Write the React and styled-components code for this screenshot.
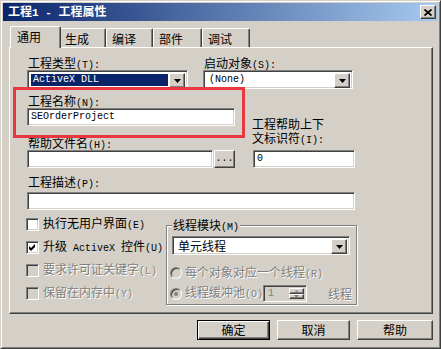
import React from 'react';
import styled, { createGlobalStyle, css } from 'styled-components';

const GlobalStyle = createGlobalStyle`
  html, body { margin: 0; padding: 0; background: #d4d0c8; }
  body {
    font-family: "Noto Sans CJK SC", "Liberation Sans", sans-serif;
    font-size: 12px;
    color: #000;
  }
  * { box-sizing: border-box; }
`;

const raised = css`
  background: #d4d0c8;
  border: 1px solid;
  border-color: #fff #404040 #404040 #fff;
  box-shadow: inset -1px -1px #808080;
`;

const sunken = css`
  border: 1px solid;
  border-color: #808080 #fff #fff #808080;
  box-shadow: inset 1px 1px #404040, inset -1px -1px #d4d0c8;
`;

const disabledText = css`
  color: #808080;
  text-shadow: 1px 1px #fff;
`;

const Half = styled.span`
  font-family: "Liberation Mono", monospace;
  font-size: 10px;
`;

// latin runs get the half-width mono face, like SimSun does
const Txt = ({ children }) =>
  String(children)
    .split(/([\x00-\xff]+)/)
    .map((p, i) =>
      p === '' ? null : i % 2 === 1 ? <Half key={i}>{p}</Half> : <React.Fragment key={i}>{p}</React.Fragment>
    );

const Window = styled.div`
  width: 441px;
  height: 349px;
  display: flex;
  flex-direction: column;
  background: #d4d0c8;
  border: 1px solid;
  border-color: #d4d0c8 #404040 #404040 #d4d0c8;
  box-shadow: inset 1px 1px #fff, inset -1px -1px #808080;
  padding: 2px;
`;

const TitleBar = styled.div`
  height: 18px;
  display: flex;
  align-items: center;
  padding: 0 2px 0 5px;
  background: linear-gradient(to right, #0a246a, #a6caf0);
  color: #fff;
  font-weight: bold;
  line-height: 14px;
  ${Half} { font-size: 11px; }
`;

const CloseButton = styled.div`
  ${raised};
  margin-left: auto;
  width: 16px;
  height: 14px;
  display: flex;
  align-items: center;
  justify-content: center;
`;

const Body = styled.div`
  flex: 1;
  display: flex;
  flex-direction: column;
  padding: 5px 5px 6px 6px;
`;

const TabRow = styled.div`
  display: flex;
  align-items: flex-end;
  height: 21px;
  padding-left: 3px;
`;

const Tab = styled.div`
  width: ${p => p.$w}px;
  height: 19px;
  padding: 3px 0 0 5px;
  line-height: 14px;
  background: #d4d0c8;
  border-top: 1px solid #fff;
  border-left: 1px solid #fff;
  border-right: 1px solid #404040;
  border-radius: 2px 2px 0 0;
  box-shadow: inset -1px 0 #808080;
  white-space: nowrap;
  ${p => p.$active && css`
    width: ${p.$w + 4}px;
    height: 22px;
    margin: 0 -2px -1px;
    padding-left: 6px;
    position: relative;
    z-index: 1;
  `}
`;

const Panel = styled.div`
  height: 267px;
  border: 1px solid;
  border-color: #fff #404040 #404040 #fff;
  box-shadow: inset -1px -1px #808080;
  padding: 8px 0 0 17px;
  display: flex;
  flex-direction: column;
`;

const Row = styled.div`
  display: flex;
  align-items: ${p => p.$align || 'flex-start'};
  gap: ${p => p.$gap || 0}px;
  margin-top: ${p => p.$mt || 0}px;
`;

const Col = styled.div`
  display: flex;
  flex-direction: column;
  width: ${p => p.$w}px;
  margin-left: ${p => p.$ml || 0}px;
`;

const Label = styled.div`
  line-height: 14px;
  height: 14px;
  padding-left: 1px;
  white-space: nowrap;
  margin-top: ${p => p.$mt || 0}px;
  margin-bottom: ${p => p.$mb || 0}px;
`;

const MultiLabel = styled.div`
  line-height: 14px;
  margin: 0 0 2px -1px;
  white-space: nowrap;
`;

const NameGroup = styled.div`
  position: relative;
  display: flex;
  flex-direction: column;
  margin-top: 5px;
  &::after {
    content: '';
    position: absolute;
    top: -7px;
    left: -14px;
    right: -10px;
    bottom: -12px;
    border: 3px solid #e8373f;
    pointer-events: none;
  }
`;

const TextBox = styled.div`
  ${sunken};
  width: ${p => (p.$w ? `${p.$w}px` : 'auto')};
  height: 18px;
  background: #fff;
  padding: 0 3px;
  display: flex;
  align-items: center;
  line-height: 12px;
  white-space: nowrap;
`;

const Combo = styled.div`
  ${sunken};
  width: ${p => p.$w}px;
  height: 19px;
  background: #fff;
  padding: 2px;
  display: flex;
  margin-left: ${p => p.$ml || 0}px;
  margin-top: ${p => p.$mt || 0}px;
`;

const ComboText = styled.div`
  flex: 1;
  margin: 1px 1px 0 1px;
  padding-left: 2px;
  display: flex;
  align-items: center;
  line-height: 12px;
  white-space: nowrap;
  ${p => p.$selected && css`
    background: #0a246a;
    color: #fff;
  `}
`;

const DropButton = styled.div`
  ${raised};
  width: 16px;
  height: 15px;
  display: flex;
  align-items: center;
  justify-content: center;
`;

const SmallButton = styled.div`
  ${raised};
  width: 21px;
  height: 18px;
  display: flex;
  align-items: flex-end;
  justify-content: center;
  padding-bottom: 3px;
  line-height: 10px;
`;

const Checks = styled.div`
  width: 139px;
  display: flex;
  flex-direction: column;
`;

const CheckRow = styled.div`
  height: 23px;
  display: flex;
  align-items: center;
  margin-left: -1px;
  white-space: nowrap;
  line-height: 14px;
  ${p => p.$disabled && disabledText};
`;

const CheckBox = styled.span`
  ${sunken};
  width: 13px;
  height: 13px;
  flex: none;
  margin-right: 4px;
  background: ${p => (p.$disabled ? '#d4d0c8' : '#fff')};
  display: flex;
  align-items: center;
  justify-content: center;
  text-shadow: none;
`;

const GroupBox = styled.div`
  width: 191px;
  height: 80px;
  margin-top: 12px;
  border: 1px solid #808080;
  box-shadow: inset 1px 1px #fff, 1px 1px #fff;
  padding-left: 3px;
  display: flex;
  flex-direction: column;
`;

const Legend = styled.div`
  align-self: flex-start;
  margin: -8px 0 0 2px;
  padding: 0 1px;
  background: #d4d0c8;
  line-height: 14px;
  white-space: nowrap;
`;

const RadioRow = styled.div`
  height: 21px;
  display: flex;
  align-items: center;
  margin-top: ${p => p.$mt || 0}px;
  white-space: nowrap;
  line-height: 14px;
  ${disabledText};
`;

const Radio = styled.span`
  width: 12px;
  height: 12px;
  flex: none;
  margin-right: 3px;
  border-radius: 50%;
  border: 1px solid;
  border-color: #808080 #fff #fff #808080;
  box-shadow: inset 1px 1px #404040, inset -1px -1px #d4d0c8;
  background: #d4d0c8;
  display: flex;
  align-items: center;
  justify-content: center;
  &::after {
    content: '';
    display: ${p => (p.$checked ? 'block' : 'none')};
    width: 4px;
    height: 4px;
    border-radius: 50%;
    background: #808080;
  }
`;

const Spin = styled.div`
  ${sunken};
  width: 44px;
  height: 17px;
  background: #d4d0c8;
  display: flex;
  padding: 2px;
  text-shadow: none;
`;

const SpinValue = styled.div`
  flex: 1;
  padding-left: 2px;
  display: flex;
  align-items: center;
  line-height: 12px;
  color: #808080;
`;

const SpinButtons = styled.div`
  width: 15px;
  display: flex;
  flex-direction: column;
`;

const SpinPart = styled.div`
  ${raised};
  flex: 1;
  display: flex;
  align-items: center;
  justify-content: center;
`;

const SpinUnit = styled.span`
  margin-left: 21px;
`;

const ButtonRow = styled.div`
  display: flex;
  justify-content: flex-end;
  gap: 7px;
  margin-top: 6px;
`;

const Button = styled.div`
  ${raised};
  width: ${p => p.$w}px;
  height: 20px;
  display: flex;
  align-items: center;
  justify-content: center;
  line-height: 14px;
  ${p => p.$default && css`
    border: 1px solid #000;
    box-shadow: inset 1px 1px #fff, inset -1px -1px #404040, inset -2px -2px #808080;
  `}
`;

const Arrow = ({ color = '#000' }) => (
  <svg width="7" height="4" viewBox="0 0 7 4">
    <path d="M0 0h7L3.5 4z" fill={color} />
  </svg>
);

const Check = () => (
  <svg width="9" height="9" viewBox="0 0 9 9">
    <path d="M1 3L3 5L7 1V4L3 8L1 6Z" fill="#000" />
  </svg>
);

const tabs = [
  { label: '通用', w: 47, active: true },
  { label: '生成', w: 47 },
  { label: '编译', w: 47 },
  { label: '部件', w: 49 },
  { label: '调试', w: 48 },
];

const checks = [
  { label: '执行无用户界面(E)' },
  { label: '升级 ActiveX 控件(U)', checked: true },
  { label: '要求许可证关键字(L)', disabled: true },
  { label: '保留在内存中(Y)', disabled: true },
];

export default function App() {
  return (
    <>
      <GlobalStyle />
      <Window>
        <TitleBar>
          <span><Txt>工程1 - 工程属性</Txt></span>
          <CloseButton>
            <svg width="8" height="7" viewBox="0 0 8 7">
              <path d="M0.5 0.5L7.5 6.5M7.5 0.5L0.5 6.5" stroke="#000" strokeWidth="1.7" />
            </svg>
          </CloseButton>
        </TitleBar>
        <Body>
          <TabRow>
            {tabs.map(t => (
              <Tab key={t.label} $w={t.w} $active={t.active}>{t.label}</Tab>
            ))}
          </TabRow>
          <Panel>
            <Row $gap={15}>
              <Col $w={161}>
                <Label><Txt>工程类型(T):</Txt></Label>
                <Combo $w={161}>
                  <ComboText $selected><Half>ActiveX DLL</Half></ComboText>
                  <DropButton><Arrow /></DropButton>
                </Combo>
              </Col>
              <Col $w={150}>
                <Label><Txt>启动对象(S):</Txt></Label>
                <Combo $w={150}>
                  <ComboText><Half>(None)</Half></ComboText>
                  <DropButton><Arrow /></DropButton>
                </Combo>
              </Col>
            </Row>

            <Row $align="flex-end">
              <Col $w={208}>
                <NameGroup>
                  <Label><Txt>工程名称(N):</Txt></Label>
                  <TextBox><Half>SEOrderProject</Half></TextBox>
                </NameGroup>
                <Label $mt={10}><Txt>帮助文件名(H):</Txt></Label>
                <Row $gap={1}>
                  <TextBox $w={186} />
                  <SmallButton><Half>...</Half></SmallButton>
                </Row>
              </Col>
              <Col $w={102} $ml={18}>
                <MultiLabel>
                  工程帮助上下<br />
                  <Txt>文标识符(I):</Txt>
                </MultiLabel>
                <TextBox><Half>0</Half></TextBox>
              </Col>
            </Row>

            <Label $mt={7} $mb={3}><Txt>工程描述(P):</Txt></Label>
            <TextBox $w={328} />

            <Row $mt={3}>
              <Checks>
                {checks.map(c => (
                  <CheckRow key={c.label} $disabled={c.disabled}>
                    <CheckBox $disabled={c.disabled}>{c.checked && <Check />}</CheckBox>
                    <span><Txt>{c.label}</Txt></span>
                  </CheckRow>
                ))}
              </Checks>
              <GroupBox>
                <Legend><Txt>线程模块(M)</Txt></Legend>
                <Combo $w={178} $ml={2} $mt={1}>
                  <ComboText>单元线程</ComboText>
                  <DropButton><Arrow /></DropButton>
                </Combo>
                <RadioRow $mt={8}>
                  <Radio />
                  <span><Txt>每个对象对应一个线程(R)</Txt></span>
                </RadioRow>
                <RadioRow>
                  <Radio $checked />
                  <span><Txt>线程缓冲池(O)</Txt></span>
                  <Spin>
                    <SpinValue><Half>1</Half></SpinValue>
                    <SpinButtons>
                      <SpinPart>
                        <svg width="5" height="3" viewBox="0 0 5 3"><path d="M0 3h5L2.5 0z" fill="#808080" /></svg>
                      </SpinPart>
                      <SpinPart>
                        <svg width="5" height="3" viewBox="0 0 5 3"><path d="M0 0h5L2.5 3z" fill="#808080" /></svg>
                      </SpinPart>
                    </SpinButtons>
                  </Spin>
                  <SpinUnit>线程</SpinUnit>
                </RadioRow>
              </GroupBox>
            </Row>
          </Panel>
          <ButtonRow>
            <Button $w={73} $default>确定</Button>
            <Button $w={73}>取消</Button>
            <Button $w={76}>帮助</Button>
          </ButtonRow>
        </Body>
      </Window>
    </>
  );
}
